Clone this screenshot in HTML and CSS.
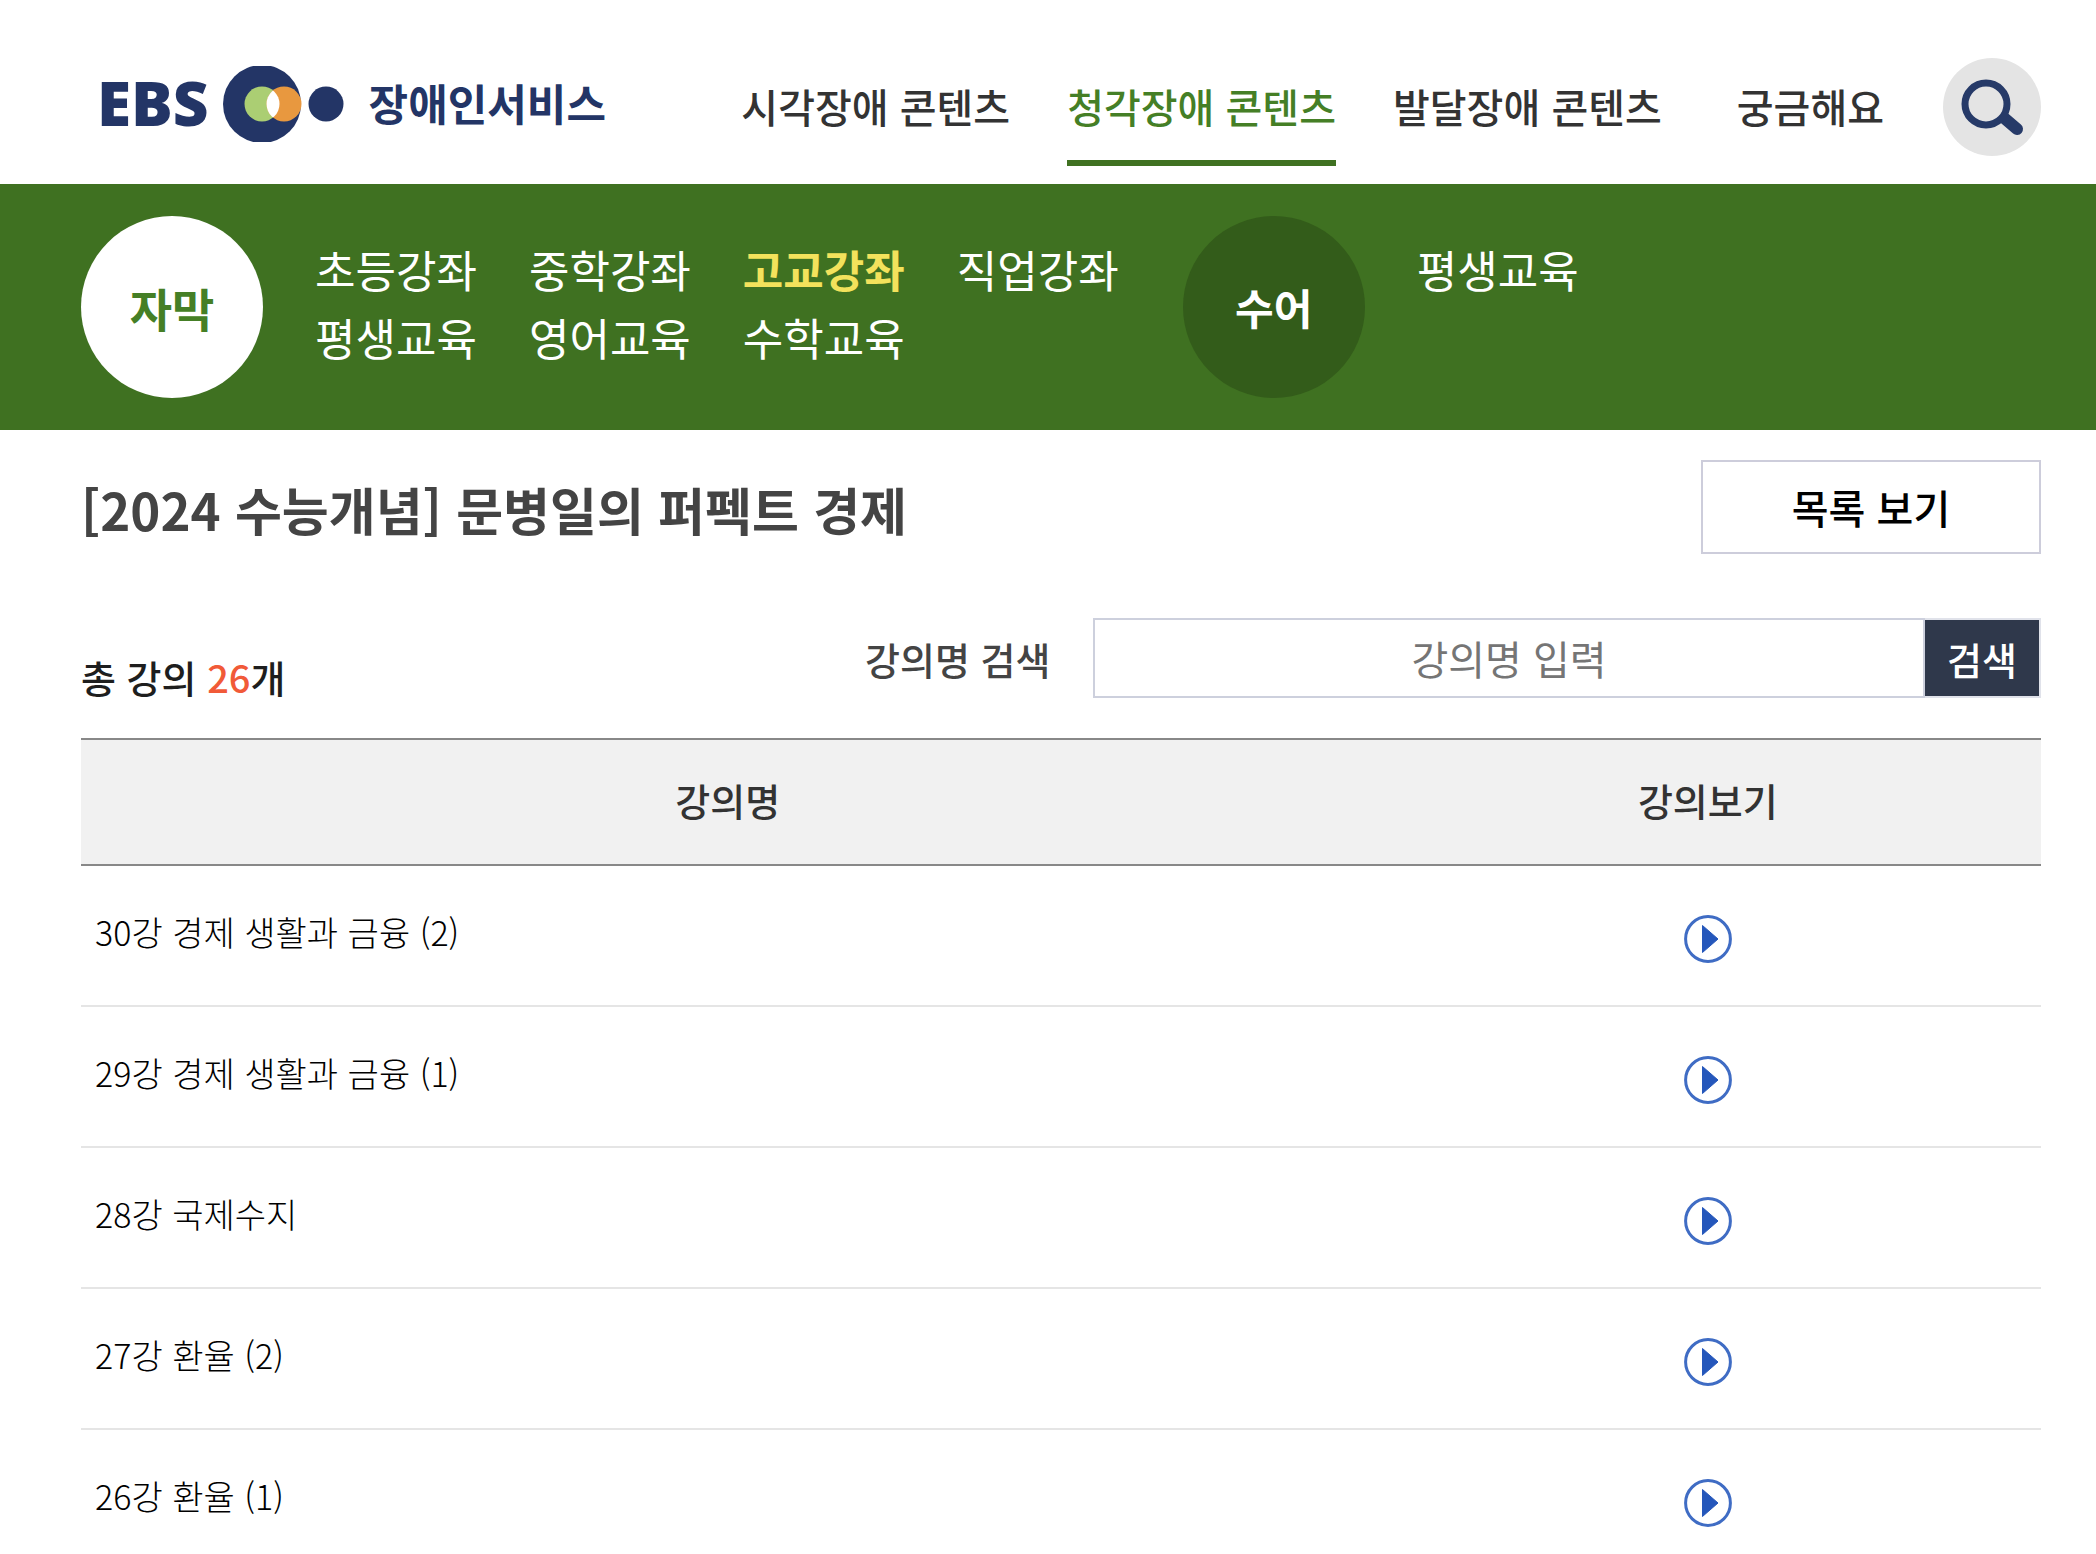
FILE: index.html
```html
<!DOCTYPE html>
<html lang="ko">
<head>
    <meta charset="UTF-8">
    <meta name="viewport" content="width=device-width, initial-scale=1.0">
    <title>EBS 장애인서비스</title>
    <link rel="stylesheet" href="styles.css">
</head>
<body>
    <svg class="symbols" aria-hidden="true">
        <symbol id="play" viewBox="0 0 48 48">
            <circle cx="24" cy="24" r="22.4" fill="#fff" stroke="#3f6cc4" stroke-width="3"/>
            <path d="M18.5 10.5 L34 24 L18.5 37.5 Z" fill="#2557bb" stroke="#2557bb" stroke-linejoin="round"/>
        </symbol>
    </svg>

    <header class="header">
        <a href="#" class="logo">
            <span class="logo-ebs">EBS</span>
            <svg class="logo-mark" viewBox="0 0 122 76" aria-hidden="true">
                <clipPath id="lens"><circle cx="39" cy="38" r="17.5"/></clipPath>
                <circle cx="39" cy="38" r="39" fill="#233566"/>
                <circle cx="39" cy="38" r="17.5" fill="#abce73"/>
                <circle cx="61" cy="38" r="17.5" fill="#e8983f"/>
                <circle cx="61" cy="38" r="17.5" fill="#fff" clip-path="url(#lens)"/>
                <circle cx="103" cy="38" r="17.5" fill="#233566"/>
            </svg>
            <span class="logo-name">장애인서비스</span>
        </a>
        <nav class="gnb">
            <a href="#">시각장애 콘텐츠</a>
            <a href="#" class="active">청각장애 콘텐츠</a>
            <a href="#">발달장애 콘텐츠</a>
            <a href="#" class="help">궁금해요</a>
        </nav>
        <button type="button" class="btn-find" aria-label="검색 열기">
            <svg viewBox="0 0 98 98" aria-hidden="true">
                <path d="M60 59 L74 71" stroke="#263a68" stroke-width="12" stroke-linecap="round"/>
                <circle cx="43" cy="46" r="21" fill="#e4e4e4" stroke="#263a68" stroke-width="7"/>
            </svg>
        </button>
    </header>

    <!-- 하위 메뉴 -->
    <div class="lnb">
        <strong class="round caption">자막</strong>
        <ul class="lnb-list">
            <li><a href="#">초등강좌</a></li>
            <li><a href="#">중학강좌</a></li>
            <li><a href="#" class="on">고교강좌</a></li>
            <li><a href="#">직업강좌</a></li>
            <li><a href="#">평생교육</a></li>
            <li><a href="#">영어교육</a></li>
            <li><a href="#">수학교육</a></li>
        </ul>
        <strong class="round sign">수어</strong>
        <ul class="lnb-list">
            <li><a href="#">평생교육</a></li>
        </ul>
    </div>

    <main class="content">
        <div class="title-area">
            <h1>[2024 수능개념] 문병일의 퍼펙트 경제</h1>
            <a href="#" class="btn-list">목록 보기</a>
        </div>

        <div class="search-area">
            <p class="total">총 강의 <span>26</span>개</p>
            <form class="search-form">
                <label for="lecture">강의명 검색</label>
                <input type="text" id="lecture" placeholder="강의명 입력">
                <button type="submit">검색</button>
            </form>
        </div>

        <table class="lecture-table">
            <thead>
                <tr>
                    <th scope="col" class="col-name">강의명</th>
                    <th scope="col">강의보기</th>
                </tr>
            </thead>
            <tbody>
                <tr>
                    <td class="name">30강 경제 생활과 금융 (2)</td>
                    <td class="view"><a href="#" aria-label="30강 보기"><svg><use href="#play"/></svg></a></td>
                </tr>
                <tr>
                    <td class="name">29강 경제 생활과 금융 (1)</td>
                    <td class="view"><a href="#" aria-label="29강 보기"><svg><use href="#play"/></svg></a></td>
                </tr>
                <tr>
                    <td class="name">28강 국제수지</td>
                    <td class="view"><a href="#" aria-label="28강 보기"><svg><use href="#play"/></svg></a></td>
                </tr>
                <tr>
                    <td class="name">27강 환율 (2)</td>
                    <td class="view"><a href="#" aria-label="27강 보기"><svg><use href="#play"/></svg></a></td>
                </tr>
                <tr>
                    <td class="name">26강 환율 (1)</td>
                    <td class="view"><a href="#" aria-label="26강 보기"><svg><use href="#play"/></svg></a></td>
                </tr>
            </tbody>
        </table>
    </main>
</body>
</html>
```
FILE: styles.css
```css
* {
    margin: 0;
    padding: 0;
    box-sizing: border-box;
}

body {
    font-family: 'Noto Sans CJK KR', sans-serif;
    font-size: 38px;
    color: #333;
    background: #fff;
}

a {
    color: inherit;
    text-decoration: none;
}

ul {
    list-style: none;
}

input,
button {
    font-family: inherit;
    font-size: inherit;
}

.symbols {
    display: none;
}

/* 헤더 */
.header {
    display: flex;
    align-items: center;
    height: 184px;
    padding: 32px 55px 4px 97px;
}

.logo {
    display: flex;
    align-items: center;
    margin-top: -4px;
    color: #233566;
    line-height: 72px;
}

.logo-ebs {
    padding-bottom: 4px;
    font-family: 'Open Sans', sans-serif;
    font-size: 62px;
    font-weight: 800;
}

.logo-mark {
    width: 122px;
    height: 76px;
    margin: 0 24px 0 14px;
}

.logo-name {
    padding-bottom: 4px;
    font-size: 43px;
    font-weight: 700;
}

.gnb {
    display: flex;
    align-self: flex-end;
    gap: 57px;
    margin-left: auto;
    margin-right: 59px;
    padding-bottom: 14px;
}

.gnb a {
    padding-bottom: 20px;
    border-bottom: 6px solid transparent;
    font-size: 40px;
    font-weight: 500;
    line-height: 68px;
}

.gnb .active {
    color: #457f26;
    border-color: #3f7121;
}

.gnb .help {
    margin-left: 18px;
}

.btn-find {
    width: 98px;
    height: 98px;
    margin-top: 2px;
    border: none;
    border-radius: 50%;
    background: #e4e4e4;
    cursor: pointer;
}

.btn-find svg {
    display: block;
    width: 98px;
    height: 98px;
}

/* 하위 메뉴 */
.lnb {
    display: flex;
    padding: 32px 81px;
    background: #3f7121;
    color: #fff;
}

.round {
    width: 182px;
    height: 182px;
    border-radius: 50%;
    text-align: center;
    line-height: 182px;
    font-weight: 700;
}

.caption {
    background: #fff;
    color: #457f26;
    font-size: 46px;
}

.sign {
    margin-left: 64px;
    background: #335c1a;
    font-size: 42px;
}

.lnb-list {
    display: grid;
    grid-template-columns: repeat(4, auto);
    column-gap: 52px;
    align-content: start;
    margin: 19px 0 0 52px;
    font-size: 44px;
    line-height: 68px;
}

.lnb-list .on {
    color: #f3e25c;
    font-weight: 700;
}

/* 본문 */
.content {
    padding: 30px 55px 0 81px;
}

.title-area {
    display: flex;
    justify-content: space-between;
    align-items: center;
}

h1 {
    padding-top: 4px;
    color: #444;
    font-size: 51px;
    font-weight: 700;
}

.btn-list {
    width: 340px;
    border: 2px solid #cdcddb;
    color: #000;
    font-size: 40px;
    font-weight: 500;
    line-height: 90px;
    text-align: center;
}

.search-area {
    display: flex;
    justify-content: space-between;
    align-items: flex-end;
    margin: 64px 0 40px;
}

.total {
    color: #1e1e1e;
    font-weight: 500;
    line-height: 42px;
}

.total span {
    color: #f15a38;
}

.search-form {
    display: flex;
    width: 60%;
    align-items: center;
}

.search-form label {
    width: 228px;
    color: #444;
    font-weight: 500;
}

.search-form input {
    flex: 1;
    min-width: 0;
    height: 80px;
    border: 2px solid #cdd0dd;
    color: #333;
    font-size: 40px;
    text-align: center;
}

.search-form input::placeholder {
    color: #757575;
}

.search-form button {
    width: 116px;
    height: 80px;
    border: 2px solid #e0e2ea;
    border-left: none;
    background: #2f384b;
    color: #fff;
    font-weight: 500;
    cursor: pointer;
}

/* 강의 목록 */
.lecture-table {
    width: 100%;
    border-collapse: separate;
    border-spacing: 0;
}

.lecture-table th {
    height: 128px;
    padding-bottom: 5px;
    border-top: 2px solid #888;
    border-bottom: 2px solid #888;
    background: #f1f1f1;
    font-weight: 500;
}

.lecture-table .col-name {
    width: 66%;
}

.lecture-table td {
    height: 141px;
    border-bottom: 2px solid #e5e5e5;
}

.name {
    padding: 0 14px 8px;
    color: #000;
    font-size: 34px;
    font-weight: 300;
}

.view {
    padding-top: 7px;
}

.view a,
.view svg {
    display: block;
    width: 48px;
    height: 48px;
    margin: 0 auto;
}
```
